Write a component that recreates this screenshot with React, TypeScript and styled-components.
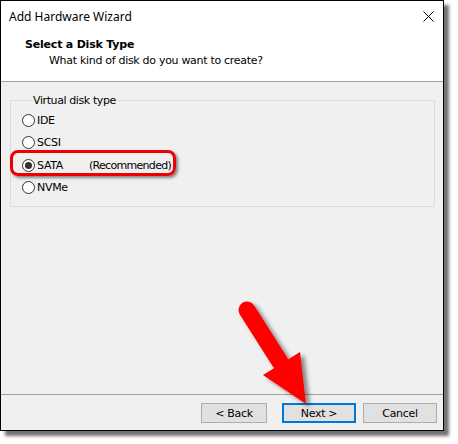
import React from "react";
import styled, { createGlobalStyle } from "styled-components";

const Global = createGlobalStyle`
  html, body { margin: 0; padding: 0; background: #ffffff; }
  * { box-sizing: border-box; }
`;

const Page = styled.div`
  position: relative;
  width: 458px;
  height: 444px;
  background: #ffffff;
`;

const Window = styled.div`
  width: 444px;
  height: 431px;
  border: 1px solid #000;
  background: #f0f0f0;
  display: flex;
  flex-direction: column;
  box-shadow: 5px 5px 3px rgba(0, 0, 0, 0.55);
  font-family: "Liberation Sans", Arial, sans-serif;
  font-size: 11px;
  color: #000;
`;

const TitleBar = styled.div`
  height: 30px;
  background: #fff;
  display: flex;
  align-items: center;
  justify-content: space-between;
  padding: 0 9px 0 8px;
`;

const TitleText = styled.span`
  font-family: "Noto Sans", "Open Sans", sans-serif;
  font-size: 12px;
  color: #000;
`;

const Header = styled.div`
  height: 51px;
  background: #fff;
  border-bottom: 1px solid #a0a0a0;
  padding: 7px 0 0 24px;
  display: flex;
  flex-direction: column;
  gap: 3px;
`;

const HeaderTitle = styled.div`
  font-weight: bold;
  font-size: 11px;
  font-family: "DejaVu Sans", Verdana, sans-serif;
  letter-spacing: -0.2px;
`;

const HeaderSub = styled.div`
  padding-left: 24px;
  font-size: 11px;
  font-family: "DejaVu Sans", Verdana, sans-serif;
  letter-spacing: -0.3px;
  color: #000;
`;

const Body = styled.div`
  flex: 1;
  padding: 12px 8px 0 9px;
`;

const GroupBox = styled.fieldset`
  margin: 0;
  width: 425px;
  height: 113px;
  border: 1px solid #dcdcdc;
  padding: 7px 0 0 11px;
  display: flex;
  flex-direction: column;
  gap: 9.3px;
`;

const Legend = styled.legend`
  padding: 0 1px;
  margin-left: 10px;
  font-size: 11px;
  font-family: "DejaVu Sans", Verdana, sans-serif;
  letter-spacing: -0.4px;
`;

const RadioRow = styled.div`
  display: flex;
  align-items: center;
  height: 13px;
  font-family: "DejaVu Sans", Verdana, sans-serif;
  font-size: 11px;
  letter-spacing: -0.3px;
`;

const Circle = styled.span<{ $on?: boolean }>`
  width: 13px;
  height: 13px;
  border-radius: 50%;
  border: 1px solid #333;
  background: #fff;
  display: inline-flex;
  align-items: center;
  justify-content: center;
  margin-right: 2px;
  &::after {
    content: "";
    width: 7px;
    height: 7px;
    border-radius: 50%;
    background: ${(p) => (p.$on ? "#333" : "transparent")};
  }
`;

const RadioLabel = styled.span<{ $w?: number; $tight?: boolean }>`
  display: inline-block;
  width: ${(p) => (p.$w ? p.$w + "px" : "auto")};
  letter-spacing: ${(p) => (p.$tight ? "-0.7px" : "inherit")};
`;

const Footer = styled.div`
  height: 36px;
  border-top: 1px solid #a0a0a0;
  display: flex;
  align-items: flex-start;
  padding: 8px 0 0 200px;
`;

const Button = styled.div<{ $primary?: boolean; $w: number; $ml: number }>`
  width: ${(p) => p.$w}px;
  height: 20px;
  margin-left: ${(p) => p.$ml}px;
  background: #e1e1e1;
  border: ${(p) => (p.$primary ? "2px solid #0078d7" : "1px solid #adadad")};
  display: flex;
  align-items: center;
  justify-content: center;
  font-family: "DejaVu Sans", Verdana, sans-serif;
  font-size: 11px;
  letter-spacing: -0.3px;
`;

const Highlight = styled.div`
  position: absolute;
  left: 10px;
  top: 150px;
  width: 166px;
  height: 26px;
  border: 3px solid #ee0000;
  border-radius: 8px;
  box-shadow: 2px 2px 3px rgba(0, 0, 0, 0.45);
`;

const ArrowSvg = styled.svg`
  position: absolute;
  left: 0;
  top: 0;
  pointer-events: none;
`;

function CloseIcon() {
  return (
    <svg width="11" height="11" viewBox="0 0 11 11">
      <path d="M0.5 0.5 L10.5 10.5 M10.5 0.5 L0.5 10.5" stroke="#000" strokeWidth="1" />
    </svg>
  );
}

export default function App() {
  return (
    <Page>
      <Global />
      <Window>
        <TitleBar>
          <TitleText>Add Hardware Wizard</TitleText>
          <CloseIcon />
        </TitleBar>
        <Header>
          <HeaderTitle>Select a Disk Type</HeaderTitle>
          <HeaderSub>What kind of disk do you want to create?</HeaderSub>
        </Header>
        <Body>
          <GroupBox>
            <Legend>Virtual disk type</Legend>
            <RadioRow>
              <Circle />
              <RadioLabel>IDE</RadioLabel>
            </RadioRow>
            <RadioRow>
              <Circle />
              <RadioLabel>SCSI</RadioLabel>
            </RadioRow>
            <RadioRow>
              <Circle $on />
              <RadioLabel $w={52}>SATA</RadioLabel>
              <RadioLabel $tight>(Recommended)</RadioLabel>
            </RadioRow>
            <RadioRow>
              <Circle />
              <RadioLabel>NVMe</RadioLabel>
            </RadioRow>
          </GroupBox>
        </Body>
        <Footer>
          <Button $w={66} $ml={0}>&lt; Back</Button>
          <Button $w={74} $ml={15} $primary>Next &gt;</Button>
          <Button $w={74} $ml={7}>Cancel</Button>
        </Footer>
      </Window>
      <Highlight />
      <ArrowSvg width="458" height="444" viewBox="0 0 458 444">
        <defs>
          <filter id="sh" x="-30%" y="-30%" width="160%" height="160%">
            <feDropShadow dx="4" dy="3" stdDeviation="2" floodColor="#000" floodOpacity="0.45" />
          </filter>
        </defs>
        <g filter="url(#sh)" fill="#ff0000">
          <line x1="247" y1="310" x2="280" y2="362" stroke="#ff0000" strokeWidth="17" strokeLinecap="round" />
          <polygon points="263,375 300,352 306,404" />
        </g>
      </ArrowSvg>
    </Page>
  );
}
